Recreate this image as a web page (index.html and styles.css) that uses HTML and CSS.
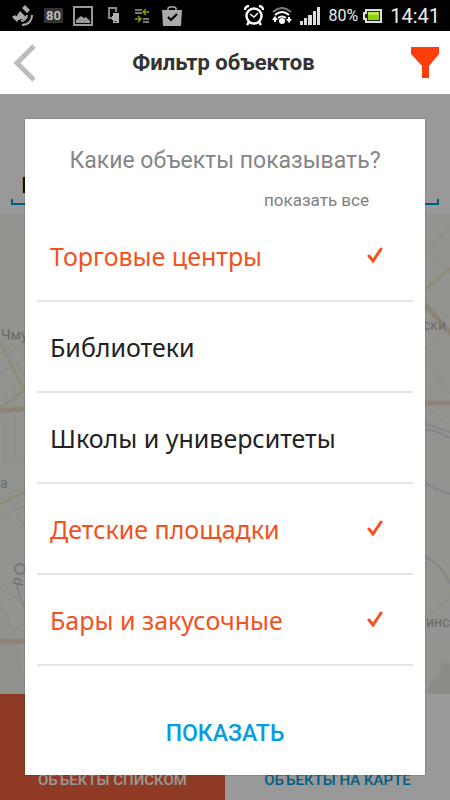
FILE: index.html
```html
<!DOCTYPE html>
<html lang="ru">
<head>
<meta charset="utf-8">
<meta name="viewport" content="width=device-width, initial-scale=1">
<title>Фильтр объектов</title>
<link rel="stylesheet" href="styles.css">
</head>
<body>
<div class="screen">
  <div class="status">
    <div class="status-group status-left">
      <svg width="22" height="24" viewBox="0 0 22 24" fill="#aaa"><path d="M8 7l6 6-3 3-1-1-3 1-3-3 2-3zM10 4l3-3 5 5-3 3zM0 13l3-2 4 4-2 3z"/><path d="M9 17c3 0 6-3 6-6M10 21c6 0 10-4 10-10" fill="none" stroke="#aaa" stroke-width="2"/></svg>
      <span class="badge">80</span>
      <svg width="20" height="20" viewBox="0 0 20 20"><path d="M1 1h18v18H1z" fill="none" stroke="#999" stroke-width="2"/><path d="M3 17v-3l5-4 3 2 2-1 4 4v2z" fill="#999"/></svg>
      <svg class="devices" width="12" height="18" viewBox="0 0 12 18"><path d="M4 11H1V1h7v4" fill="none" stroke="#888" stroke-width="2"/><path d="M5 6h6v10H5v-3H4V9h1z" fill="#b0b0b0"/><path d="M6 14h3v1H6z" fill="#444"/></svg>
      <svg class="sync" width="14" height="14" viewBox="0 0 14 14"><path d="M0 1h7M0 4h7M8 10h6M8 13h6" stroke="#777" stroke-width="2"/><path d="M14 3H9m2-3L8 3l3 3M0 10h5M3 7l3 3-3 3" fill="none" stroke="#83a400" stroke-width="1.4"/></svg>
      <svg width="20" height="20" viewBox="0 0 20 20"><path d="M6 5V3q0-2 2-2h4q2 0 2 2v2" fill="none" stroke="#aaa" stroke-width="1.5"/><path d="M0 4h20l-1 16H1z" fill="#aaa"/><path d="M6 11l3 3 6-6" fill="none" stroke="#000" stroke-width="2.2"/></svg>
    </div>
    <div class="status-group status-right">
      <svg width="20" height="21" viewBox="0 0 20 21" fill="none" stroke="#fff"><circle cx="10" cy="11" r="7.5" stroke-width="2.4"/><path d="M1 5a4 4 0 0 1 4-4M15 1a4 4 0 0 1 4 4M5 17l-2 3M15 17l2 3" stroke-width="2.4"/><path d="M6 9l4 3 4-4" stroke-width="1.5"/></svg>
      <svg width="20" height="18" viewBox="0 0 20 18" fill="none" stroke="#fff"><path d="M1 5q9-8 18 0" stroke="#777" stroke-width="2"/><path d="M3 8q7-6 14 0M6 11q4-3 8 0" stroke-width="2"/><circle cx="10" cy="14" r="3" fill="#fff" stroke="none"/><path d="M0 13l3-4 3 4H4v2H2v-2zM14 12h2v-2h2v2h2l-3 4z" fill="#fff" stroke="none"/></svg>
      <svg width="20" height="18" viewBox="0 0 20 18" fill="#ddd"><path d="M0 14h3v4H0zM4 11h3v7H4zM8 8h4v10H8zM13 4h3v14h-3zM17 0h3v18h-3z"/></svg>
      <span class="percent">80%</span>
      <svg width="19" height="14" viewBox="0 0 19 14"><path d="M3 1h15v12H3v-3H1V4h2z" fill="#222" stroke="#ddd" stroke-width="2"/><path d="M5 3h11v8H5z" fill="#8fd400"/><path d="M5 3h11v3H5z" fill="#b5e64a"/></svg>
      <span class="clock">14:41</span>
    </div>
  </div>

  <header class="header">
    <button class="icon-button" aria-label="Назад"><svg width="22" height="38" viewBox="0 0 22 38"><path d="M20 2L3 19l17 17" fill="none" stroke="#bdbdbd" stroke-width="5"/></svg></button>
    <h1 class="title">Фильтр объектов</h1>
    <button class="icon-button" aria-label="Фильтр"><svg width="28" height="31" viewBox="0 0 28 31"><path d="M0 0h28v7L18 19v12h-7V19L0 7z" fill="#ff3d0d"/></svg></button>
  </header>

  <main class="content">
    <div class="search"><input class="search-input" type="text" value="П" aria-label="Поиск"></div>
    <div class="map">
      <svg class="map-drawing" viewBox="0 0 450 480" preserveAspectRatio="xMidYMid slice" fill="none">
        <path d="M0 390q20 20 25 90H0z" fill="#f0f2ec"/>
        <path d="M427 480q3-12 8-17 4 2 5-5 0-10 4-11l6 3v30z" fill="#e6ebe2"/>
        <g stroke="#ebe9e2" stroke-width="1"><path d="M0 145l40-24M0 160l40-26M6 130l34 60M0 205l30-35M5 180v70M15 172v70M0 248q20-3 40 3M0 285l40-20M2 302l40-18M8 280l20 40M0 375l30 16M0 430l25-22M450 12l-22 24 22 24M410 120l40 60M420 140l30-25M405 170l40 40M430 170v20M440 160v30M425 175v15M425 405l25-22"/></g>
        <g stroke="#eceacb" stroke-width="3"><path d="M0 128l24 48M0 194l30-22M0 290l40-19M415 84l45-38"/></g>
        <path d="M0 197l40-4M0 427h40M415 80l40 44M415 189h35" stroke="#ecdcc6" stroke-width="5"/>
        <path d="M17 370q2 20 18 36M420 208l30 10" stroke="#dfdee2" stroke-width="2"/>
        <path d="M415 262q15 12 35 18M415 340q25 5 35 30M425 216q12 0 25 8" stroke="#d5e0e6" stroke-width="2"/>
        <circle cx="20" cy="355" r="5" stroke="#bccad6" stroke-width="2"/>
        <g class="map-text"><text x="1" y="126">Чму</text><text x="423" y="116">ски</text><text x="426" y="413">инс</text></g>
        <g class="water-text"><text x="0" y="274">а</text><text transform="translate(20 372) rotate(-78)">р</text></g>
      </svg>
    </div>
    <nav class="tabs">
      <button class="tab tab-active">ОБЪЕКТЫ СПИСКОМ</button>
      <button class="tab">ОБЪЕКТЫ НА КАРТЕ</button>
    </nav>

    <div class="overlay">
      <section class="dialog" role="dialog" aria-labelledby="question">
        <h2 class="question" id="question">Какие объекты показывать?</h2>
        <button class="show-all">показать все</button>
        <div class="options">
          <label class="option"><span>Торговые центры</span><input class="check" type="checkbox" checked><svg class="tick" width="18" height="18" viewBox="0 0 18 18"><path d="M3 9l4 5L15 2" /></svg></label>
          <label class="option"><span>Библиотеки</span><input class="check" type="checkbox"><svg class="tick" width="18" height="18" viewBox="0 0 18 18"><path d="M3 9l4 5L15 2" /></svg></label>
          <label class="option"><span>Школы и университеты</span><input class="check" type="checkbox"><svg class="tick" width="18" height="18" viewBox="0 0 18 18"><path d="M3 9l4 5L15 2" /></svg></label>
          <label class="option"><span>Детские площадки</span><input class="check" type="checkbox" checked><svg class="tick" width="18" height="18" viewBox="0 0 18 18"><path d="M3 9l4 5L15 2" /></svg></label>
          <label class="option"><span>Бары и закусочные</span><input class="check" type="checkbox" checked><svg class="tick" width="18" height="18" viewBox="0 0 18 18"><path d="M3 9l4 5L15 2" /></svg></label>
        </div>
        <button class="submit">ПОКАЗАТЬ</button>
      </section>
    </div>
  </main>
</div>
</body>
</html>
```
FILE: styles.css
```css
* { box-sizing: border-box; }
body { margin: 0; font-family: Roboto, "Noto Sans", sans-serif; color: #222; }
button { border: 0; padding: 0; background: none; font: inherit; color: inherit; cursor: pointer; }
svg { display: block; flex: none; }

.screen { display: flex; flex-direction: column; min-height: 100vh; background: #fff; }

.status { display: flex; justify-content: space-between; align-items: center; height: 31px; padding: 0 10px 0 12px; background: #000; color: #eee; }
.status-group { display: flex; align-items: center; gap: 10px; }
.devices { margin: 0 5px; }
.sync { margin-right: 3px; }
.badge { padding: 0 2px; background: #333; color: #bbb; font-size: 13px; font-weight: 700; line-height: 15px; }
.status-right { gap: 8px; }
.percent { font-size: 16px; }
.percent + svg { margin-left: -3px; }
.clock { font-size: 20px; }

.header { display: flex; justify-content: space-between; align-items: center; height: 63px; padding: 0 11px 0 14px; background: #fff; }
.title { margin: 0; color: #333; font-size: 22px; font-weight: 700; line-height: 28px; }

.content { position: relative; display: flex; flex: 1; flex-direction: column; }
.search { height: 120px; padding: 71px 11px 0; }
.search-input { width: 100%; height: 40px; padding: 0 8px; border: 2px solid; border-color: transparent transparent #009ddc; background: linear-gradient(#009ddc, #009ddc) left bottom / 2px 6px no-repeat, linear-gradient(#009ddc, #009ddc) right bottom / 2px 6px no-repeat; background-origin: border-box; font: 22px Roboto, sans-serif; color: #000; outline: 0; }
.map { position: relative; flex: 1; background: #f6f5ee; overflow: hidden; }
.map-drawing { position: absolute; inset: 0; width: 100%; height: 100%; }
.map-text { fill: #b4b2ae; font-size: 14px; }
.water-text { fill: #abbccc; font-size: 14px; }
.tabs { display: flex; height: 106px; }
.tab { flex: 1; padding-top: 76px; padding-bottom: 10px; color: #009ddc; font: 500 15px/20px Roboto, sans-serif; }
.tab-active { background: #ee623c; color: #fff; }

.overlay { position: absolute; inset: 0; display: flex; padding: 25px; background: rgba(0, 0, 0, .4); }
.dialog { display: flex; flex: 1; flex-direction: column; padding: 27px 12px 0; background: #fff; box-shadow: 0 0 1px rgba(0, 0, 0, .6); }
.question { margin: 0; color: #858585; font-size: 23px; font-weight: 400; line-height: 30px; text-align: center; }
.show-all { align-self: flex-end; margin: 13px 44px 0 0; color: #808080; font-size: 17px; line-height: 22px; }
.options { display: flex; flex-direction: column; font-family: "Noto Sans", sans-serif; }
.option { display: flex; justify-content: space-between; align-items: center; height: 91px; padding: 0 29px 0 13px; border-bottom: 2px solid #e5e5e5; font-size: 25px; line-height: 32px; }
.option:has(.check:checked) { color: #f4511e; }
.check { position: absolute; opacity: 0; margin: 0; }
.tick { visibility: hidden; fill: none; stroke: #f4511e; stroke-width: 3px; stroke-linecap: round; }
.check:checked + .tick { visibility: visible; }
.submit { flex: 1; padding-top: 52px; padding-bottom: 25px; color: #069ddf; font: 500 23px/30px Roboto, sans-serif; }
```
